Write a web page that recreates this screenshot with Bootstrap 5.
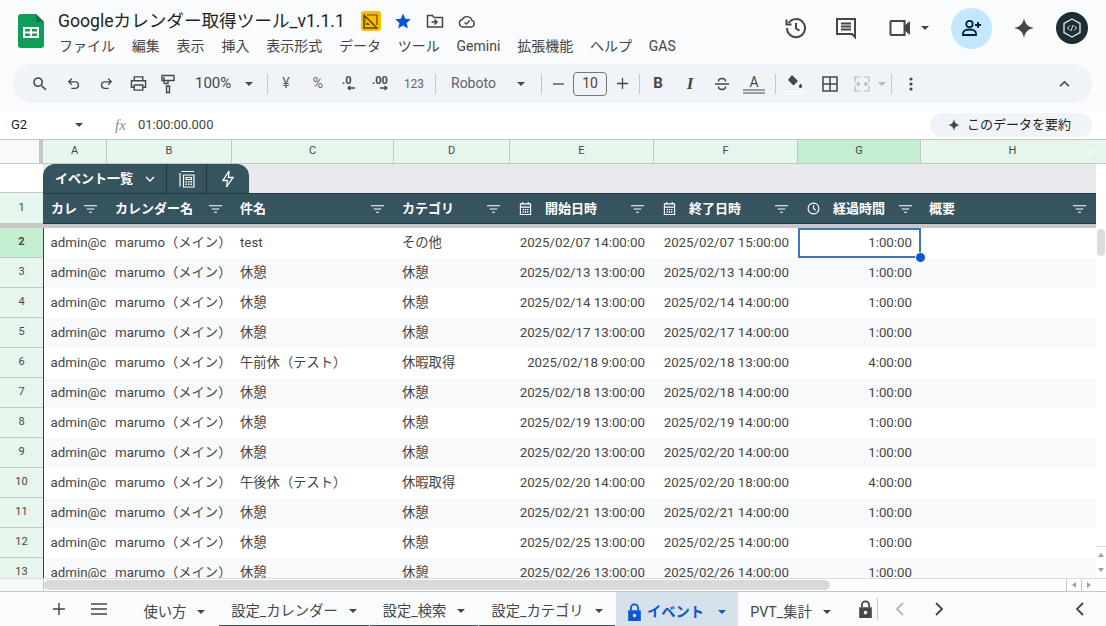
<!DOCTYPE html>
<html lang="ja">
<head>
    <meta charset="UTF-8">
    <title>Googleカレンダー取得ツール_v1.1.1</title>
    <link href="https://cdn.jsdelivr.net/npm/bootstrap@5.3.0/dist/css/bootstrap.min.css" rel="stylesheet">
    <script src="https://cdn.jsdelivr.net/npm/bootstrap@5.3.0/dist/js/bootstrap.bundle.min.js"></script>
    <style>
        html, body { height: 100%; }
        body {
            width: 1106px;
            height: 626px;
            overflow: hidden;
            background: #f9fbfd;
            color: #444746;
            font-family: Roboto, "Noto Sans CJK JP", sans-serif;
            font-size: 13px;
        }
        svg { display: block; flex: none; }
        .ico { fill: none; stroke: #444746; stroke-width: 2; }
        .ico-fill { fill: #444746; }

        /* title area */
        .top-head { height: 64px; }
        .logo-box { width: 58px; padding: 14px 0 0 18px; }
        .doc-title { font-size: 17.6px; line-height: 22px; color: #1f1f1f; padding-top: 10px; white-space: nowrap; }
        .title-icons { margin-left: 16px; }
        .title-icon { width: 32px; display: flex; justify-content: center; }
        .badge-box { width: 20px; height: 20px; margin-right: 6px; border-radius: 3px; background: #fbbc04; display: flex; align-items: center; justify-content: center; }
        .menu-line { gap: 16.8px; font-size: 14px; line-height: 20px; margin-top: 4px; margin-left: 1px; color: #444746; white-space: nowrap; }
        .head-right { margin-left: auto; padding-bottom: 8px; padding-right: 18px; }
        .hd-history { margin-right: 26px; }
        .hd-comment { margin-right: 30px; }
        .hd-video { margin-right: 9px; }
        .hd-caret { margin-right: 22px; }
        .hd-star { margin: 0 20px; }
        .share-round { width: 41px; height: 41px; border-radius: 50%; background: #c2e7ff; display: flex; align-items: center; justify-content: center; }
        .avatar-round { width: 32px; height: 32px; border-radius: 50%; background: #1b2f33; display: flex; align-items: center; justify-content: center; }

        /* toolbar */
        .tool-bar { height: 39px; margin: 0 14px 8px 13px; padding: 0 12px 0 10px; background: #f0f4f9; border-radius: 20px; color: #444746; }
        .tb { width: 32px; height: 39px; display: flex; align-items: center; justify-content: center; flex: none; font-size: 13px; white-space: nowrap; }
        .tb-small { font-size: 12px; color: #5f6368; }
        .tb-grey { color: #5f6368; font-size: 14px; }
        .tb-sep { width: 1px; height: 20px; background: #c7c7c7; flex: none; }
        .w-search { width: 34px; } .w-undo { width: 33px; } .w-redo { width: 31px; } .w-print { width: 34px; } .w-paint { width: 26px; }
        .zoom-txt { width: 60px; padding-left: 14px; justify-content: flex-start; font-size: 15px; }
        .w-caret { width: 16px; }
        .font-txt { width: 62px; justify-content: flex-start; font-size: 14px; color: #5f6368; }
        .w-step { width: 24px; }
        .size-box { width: 34px; height: 24px; border: 1px solid #747775; border-radius: 4px; display: flex; align-items: center; justify-content: center; font-size: 14px; flex: none; }
        .fmt-b { font-weight: 700; font-size: 15px; }
        .fmt-i { font-family: "Liberation Serif", serif; font-weight: 700; font-style: italic; font-size: 17px; }
        .m-l2 { margin-left: 2px; } .m-l3 { margin-left: 3px; } .m-l5 { margin-left: 5px; } .m-l10 { margin-left: 10px; } .m-l12 { margin-left: 12px; } .m-l15 { margin-left: 15px; } .m-r2 { margin-right: 2px; } .m-r4 { margin-right: 4px; }
        .tri { width: 0; height: 0; border-left: 4px solid transparent; border-right: 4px solid transparent; border-top: 4px solid #444746; flex: none; }
        .tri-muted { border-top-color: #b5b8bb; }
        .tri-blue { border-top-color: #0b57d0; }

        /* formula bar */
        .formula-bar { height: 29px; background: #fff; border-bottom: 1px solid #c4c7c5; }
        .cell-ref { width: 75px; padding-left: 11px; font-size: 13px; color: #1f1f1f; }
        .fx-mark { width: 16px; margin-left: 32px; margin-right: 7px; font-family: "Liberation Serif", serif; font-style: italic; font-size: 15px; color: #8a8d90; }
        .sum-pill { margin-left: auto; margin-right: 14px; width: 162px; height: 24px; background: #f0f4f9; border-radius: 12px; display: flex; align-items: center; justify-content: center; gap: 6px; color: #1f1f1f; font-size: 13px; }
        .sum-pill span { margin-right: 4px; }

        /* sheet */
        .sheet-wrap { height: 438px; }
        .sheet-grid {
            width: 1096px;
            height: 438px;
            overflow: hidden;
            display: grid;
            grid-template-columns: 43px 64px 125px 162px 116px 144px 144px 123px 175px;
            grid-template-rows: 24px 29px 31px 4px;
            grid-auto-rows: 30px;
            align-content: start;
            background: #fff;
        }
        .col-head { background: #e7f6ed; border-right: 1px solid #c4c7c5; border-bottom: 1px solid #c4c7c5; display: flex; align-items: center; justify-content: center; font-size: 11px; color: #444746; }
        .corner-cell { background: #f8f9fa; border-right: 4px solid #c4c7c5; }
        .col-on { background: #c4eed0; }
        .col-last { border-right: 0; padding-left: 8px; }
        .row-no { background: #e7f6ed; border-bottom: 1px solid #c4c7c5; display: flex; align-items: center; justify-content: center; font-size: 11px; color: #444746; }
        .row-on { background: #c4eed0; font-weight: 700; }
        .blank-no { background: #fff; border-bottom: 1px solid #c4c7c5; }
        .band-area { grid-column: 2 / -1; background: #e8eaed; }
        .table-tab { width: 206px; height: 29px; background: #36545e; color: #fff; border-radius: 12px 12px 0 0; display: flex; font-weight: 700; font-size: 13px; }
        .tab-part { display: flex; align-items: center; justify-content: center; height: 29px; border-right: 1px solid #1f363d; }
        .tab-name { width: 124px; gap: 12px; justify-content: flex-start; padding-left: 12px; }
        .tab-ico { width: 40px; }
        .tab-ico-end { width: 42px; border-right: 0; }
        .head-cell { background: #36545e; border-top: 1px solid #1f3a42; border-bottom: 1px solid #1f3a42; color: #fff; font-weight: 700; display: flex; align-items: center; padding: 0 9px 0 8px; overflow: hidden; white-space: nowrap; }
        .head-cell .flt { margin-left: auto; }
        .head-gap { gap: 13px; padding-left: 9px; }
        .head-clip { overflow: hidden; width: 28px; flex: none; }
        .freeze-bar { grid-column: 1 / -1; background: #c7c7c7; }
        .data-cell { padding: 0 8px; line-height: 30px; font-size: 13.3px; white-space: nowrap; overflow: hidden; color: #444746; }
        .cell-right { text-align: right; padding-right: 9px; }
        .alt-row { background: #f8f9fa; }
        .first-col { border-left: 1.5px solid #3c4043; padding-left: 6.5px; }
        .sel-cell { position: relative; box-shadow: inset 0 0 0 2px #3f73c4; overflow: visible; }
        .sel-dot { position: absolute; right: -5px; bottom: -5px; width: 9px; height: 9px; border-radius: 50%; background: #0b57d0; border: 1px solid #fff; box-sizing: content-box; z-index: 2; }

        .v-scroll { width: 10px; background: #fff; position: relative; }
        .v-head { height: 24px; background: #e7f6ed; border-bottom: 1px solid #c4c7c5; }
        .v-thumb { position: absolute; top: 89px; left: 1px; width: 8px; height: 27px; background: #dadce0; border-radius: 4px; }
        .v-btns { position: absolute; top: 406px; left: 0; width: 10px; height: 32px; border-top: 1px solid #d5d5d5; display: flex; flex-direction: column; align-items: center; justify-content: space-around; }
        .tri-up { width: 0; height: 0; border-left: 3px solid transparent; border-right: 3px solid transparent; border-bottom: 4px solid #9aa0a6; }
        .tri-dn { width: 0; height: 0; border-left: 3px solid transparent; border-right: 3px solid transparent; border-top: 4px solid #9aa0a6; }
        .h-mark { position: absolute; top: 11px; right: 11px; width: 0; height: 0; border-left: 4px solid transparent; border-right: 4px solid transparent; border-top: 4px solid #f6fbf8; }

        .h-scroll { height: 13px; background: #fff; border-top: 1px solid #dadce0; }
        .h-left { width: 44px; height: 12px; background: #f8f9fa; border-right: 1px solid #c4c7c5; }
        .h-track { width: 1022px; padding-top: 1px; }
        .h-thumb { width: 786px; height: 10px; background: #d9d9d9; border-radius: 5px; }
        .h-btns { width: 30px; display: flex; }
        .h-btn { width: 15px; height: 12px; border-left: 1px solid #c4c7c5; display: flex; align-items: center; justify-content: center; }
        .tri-l { width: 0; height: 0; border-top: 3px solid transparent; border-bottom: 3px solid transparent; border-right: 4px solid #9aa0a6; }
        .tri-r { width: 0; height: 0; border-top: 3px solid transparent; border-bottom: 3px solid transparent; border-left: 4px solid #9aa0a6; }

        /* sheet tabs */
        .tabs-bar { height: 35px; border-top: 1px solid #c4c7c5; background: #f9fbfd; }
        .tabs-left { width: 136px; padding-left: 53px; flex: none; }
        .hamburger { margin-left: 26px; }
        .sheet-tab { height: 34px; padding-top: 5px; display: flex; align-items: center; justify-content: center; gap: 11px; font-size: 14.3px; line-height: 20px; color: #444746; white-space: nowrap; flex: none; }
        .tab-line { border-bottom: 1px solid #36545e; margin-right: 1px; }
        .t1 { width: 83px; padding-right: 6px; } .t2 { width: 150px; } .t3 { width: 108px; } .t4 { width: 136px; } .t6 { width: 107px; padding-right: 2px; }
        .t5 { width: 122px; background: #d7e1ec; color: #0b57d0; font-weight: 700; gap: 6px; }
        .tab-name-blue { margin-right: 8px; }
        .tab-end { margin-left: 14px; }
        .tab-div { width: 1px; height: 22px; background: #c4c7c5; margin-left: 5px; }
        .tab-prev { margin-left: 17px; }
        .tab-next { margin-left: 31px; }
        .tab-fold { margin-left: auto; margin-right: 22px; }
    </style>
</head>
<body>
    <svg width="0" height="0" class="position-absolute">
        <symbol id="flt" viewBox="0 0 16 10"><path d="M1 1h14v1H1zM4 4.500h8v1H4zM6.500 8h3v1h-3z" fill="#fff"/></symbol>
        <symbol id="cal" viewBox="0 0 14 16"><path d="M1.500 3h11v11.500h-11zM1.500 6.500h11M4 1v3M10 1v3" fill="none" stroke="#fff" stroke-width="1.200"/><path d="M4 8.500h1.500V10H4zM6.300 8.500h1.500V10H6.300zM8.600 8.500h1.500V10H8.600zM4 11h1.500v1.500H4zM6.300 11h1.500v1.500H6.300zM8.600 11h1.500v1.500H8.600z" fill="#fff"/></symbol>
        <symbol id="lock" viewBox="0 0 14 20"><path d="M2 8V5.500a5 5 0 0 1 10 0V8h-2V5.500a3 3 0 0 0-6 0V8z"/><path fill-rule="evenodd" d="M0 8h14v12H0zM7 12a2 2 0 1 0 0 4 2 2 0 0 0 0-4z"/></symbol>
        <symbol id="star" viewBox="0 0 24 24"><path d="M12 2c1 6 4 9 10 10-6 1-9 4-10 10-1-6-4-9-10-10 6-1 9-4 10-10z"/></symbol>
    </svg>

    <header class="top-head d-flex">
        <div class="logo-box">
            <svg width="26" height="34" viewBox="0 0 26 34">
                <path d="M3 0h15l8 8v23a3 3 0 0 1-3 3H3a3 3 0 0 1-3-3V3a3 3 0 0 1 3-3z" fill="#0f9d58"/>
                <path d="M18 0l8 8h-8z" fill="#0b7a45"/>
                <path d="M5 13h16v11H5zM7 15v2.500h5V15zM14 15v2.500h5V15zM7 19.500V22h5v-2.500zM14 19.500V22h5v-2.500z" fill="#fff" fill-rule="evenodd"/>
            </svg>
        </div>
        <div>
            <div class="d-flex align-items-center doc-title">
                <span>Googleカレンダー取得ツール_v1.1.1</span>
                <div class="d-flex align-items-center title-icons">
                    <span class="badge-box">
                        <svg width="15" height="15" viewBox="0 0 15 15"><path d="M1 1l13 13H1z" fill="none" stroke="#5f4a00" stroke-width="1.500"/><path d="M1 4h3M1 7h2M1 10h3M4 1h10v10" fill="none" stroke="#5f4a00" stroke-width="1.200"/><path d="M4 8l3 3H4z" fill="#5f4a00"/></svg>
                    </span>
                    <span class="title-icon">
                        <svg width="18" height="18" viewBox="0 0 24 24"><path d="M12 2l3 7 7.500.6-5.700 5 1.700 7.400-6.500-3.900L5.500 22l1.700-7.400-5.700-5L9 9z" fill="#0b57d0"/></svg>
                    </span>
                    <span class="title-icon">
                        <svg width="18" height="16" viewBox="0 0 18 16"><path d="M1.500 2.500h5l1.500 2h8.500v9.500h-15z" fill="none" stroke="#444746" stroke-width="1.500"/><path d="M5.500 9h5M8.500 6.500L11 9l-2.500 2.500" fill="none" stroke="#444746" stroke-width="1.500"/></svg>
                    </span>
                    <span class="title-icon">
                        <svg width="18" height="14" viewBox="0 0 18 14"><path d="M5 13a3.800 3.800 0 0 1-.6-7.500 5 5 0 0 1 9.400.9A3.400 3.400 0 0 1 13.500 13z" fill="none" stroke="#444746" stroke-width="1.400"/><path d="M6.500 8.500l2 1.500 3-3.500" fill="none" stroke="#444746" stroke-width="1.400"/></svg>
                    </span>
                </div>
            </div>
            <nav class="d-flex menu-line">
                <span>ファイル</span><span>編集</span><span>表示</span><span>挿入</span><span>表示形式</span><span>データ</span><span>ツール</span><span>Gemini</span><span>拡張機能</span><span>ヘルプ</span><span>GAS</span>
            </nav>
        </div>
        <div class="head-right d-flex align-items-center">
            <svg class="hd-history" width="24" height="24" viewBox="0 0 24 24"><path d="M4.600 7A9 9 0 1 1 3 12" class="ico"/><path d="M2.500 3.500V8.500H7.500" class="ico"/><path d="M12 7v5.500l3.500 2.200" class="ico"/></svg>
            <svg class="hd-comment" width="24" height="24" viewBox="0 0 24 24"><path d="M3 3h18v18l-3-3H3z" class="ico"/><path d="M7 7.500h10M7 10.500h10M7 13.500h10" class="ico"/></svg>
            <svg class="hd-video" width="24" height="24" viewBox="0 0 24 24"><path d="M3.500 5h13v14h-13a1 1 0 0 1-1-1V6a1 1 0 0 1 1-1z" class="ico"/><path d="M16 10l6-5v14l-6-5z" class="ico-fill"/></svg>
            <span class="tri hd-caret"></span>
            <span class="share-round">
                <svg width="20" height="18" viewBox="0 0 20 18"><circle cx="7.500" cy="5" r="3.200" fill="none" stroke="#001d35" stroke-width="1.800"/><path d="M1 16v-1.500c0-2.500 3-4 6.500-4s6.500 1.500 6.500 4V16z" fill="none" stroke="#001d35" stroke-width="1.800"/><path d="M16 3v6M13 6h6" stroke="#001d35" stroke-width="1.800"/></svg>
            </span>
            <svg class="ico-fill hd-star" width="24" height="24"><use href="#star"/></svg>
            <span class="avatar-round">
                <svg width="22" height="22" viewBox="0 0 22 22"><path d="M11 2l8 4.500v9L11 20l-8-4.500v-9z" fill="none" stroke="#e8eaed" stroke-width="1.300"/><path d="M9 8.500L6.500 11 9 13.500M13 8.500l2.500 2.500-2.500 2.500M12 8l-2 6" fill="none" stroke="#e8eaed" stroke-width="1"/></svg>
            </span>
        </div>
    </header>

    <div class="tool-bar d-flex align-items-center">
        <span class="tb w-search"><svg width="18" height="18" viewBox="0 0 24 24"><path d="M15.500 14h-.79l-.28-.27C15.410 12.590 16 11.110 16 9.500 16 5.910 13.090 3 9.500 3S3 5.910 3 9.500 5.910 16 9.500 16c1.610 0 3.090-.59 4.230-1.570l.27.28v.79l5 4.990L20.490 19l-4.990-5zm-6 0C7.010 14 5 11.990 5 9.500S7.010 5 9.500 5 14 7.010 14 9.500 11.990 14 9.500 14z" class="ico-fill"/></svg></span>
        <span class="tb w-undo"><svg width="14" height="14" viewBox="0 0 16 16"><path d="M5.500 2L2 5.500 5.500 9M2 5.500h8a3.800 3.800 0 0 1 0 7.500H5" fill="none" stroke="#444746" stroke-width="1.500"/></svg></span>
        <span class="tb w-redo"><svg width="14" height="14" viewBox="0 0 16 16"><path d="M10.500 2L14 5.500 10.500 9M14 5.500H6a3.800 3.800 0 0 0 0 7.500h5" fill="none" stroke="#444746" stroke-width="1.500"/></svg></span>
        <span class="tb w-print"><svg width="17" height="17" viewBox="0 0 18 18"><path d="M4.500 6V2h9v4M4.500 13H1.500V6h15v7h-3M4.500 10.500h9V16h-9z" fill="none" stroke="#444746" stroke-width="1.500"/></svg></span>
        <span class="tb w-paint"><svg width="14" height="20" viewBox="0 0 14 20"><path d="M1 1.500h12v5H1zM7 6.500v3h-4M3 9.500V3M5.500 12h3v6.500h-3z" fill="none" stroke="#444746" stroke-width="1.400"/></svg></span>
        <span class="tb zoom-txt">100%</span>
        <span class="tb w-caret"><span class="tri"></span></span>
        <span class="tb-sep m-l10 m-r2"></span>
        <span class="tb tb-grey">¥</span>
        <span class="tb tb-grey">%</span>
        <span class="tb"><svg width="20" height="20" viewBox="0 0 20 20"><text x="2" y="10" font-size="11" font-weight="700" fill="#444746" font-family="Roboto">.0</text><path d="M15 14H8M10.500 12L8 14l2.500 2" fill="none" stroke="#444746" stroke-width="1.300"/></svg></span>
        <span class="tb"><svg width="22" height="20" viewBox="0 0 22 20"><text x="1" y="10" font-size="11" font-weight="700" fill="#444746" font-family="Roboto">.00</text><path d="M9 14h7M13.500 12l2.500 2-2.500 2" fill="none" stroke="#444746" stroke-width="1.300"/></svg></span>
        <span class="tb tb-small">123</span>
        <span class="tb-sep m-l5"></span>
        <span class="tb font-txt m-l15">Roboto</span>
        <span class="tb w-caret"><span class="tri"></span></span>
        <span class="tb-sep m-l12 m-r4"></span>
        <span class="tb w-step"><svg width="11" height="2" viewBox="0 0 12 2"><path d="M0 .3h12v1.400H0z" class="ico-fill"/></svg></span>
        <span class="size-box m-l3">10</span>
        <span class="tb w-step m-l3"><svg width="11" height="11" viewBox="0 0 12 12"><path d="M5.300 0h1.400v5.300H12v1.400H6.700V12H5.300V6.700H0V5.300h5.300z" class="ico-fill"/></svg></span>
        <span class="tb-sep m-l5"></span>
        <span class="tb m-l2 fmt-b">B</span>
        <span class="tb fmt-i">I</span>
        <span class="tb"><svg width="16" height="16" viewBox="0 0 16 16"><path d="M1 8h14M4.500 5.500a3.500 3 0 0 1 7 0M4.500 10.500a3.500 3 0 0 0 7 0" fill="none" stroke="#444746" stroke-width="1.500"/></svg></span>
        <span class="tb"><svg width="24" height="22" viewBox="0 0 24 22"><text x="12" y="14" text-anchor="middle" font-size="14" fill="#444746" font-family="Roboto">A</text><path d="M1 17h22M1 20h22" stroke="#444746" stroke-width="1"/></svg></span>
        <span class="tb-sep m-l5"></span>
        <span class="tb m-l3"><svg width="24" height="24" viewBox="0 0 24 24"><path d="M9 3l6 6-4.500 4.500L5 8z" class="ico-fill"/><path d="M17.500 11.500c1.200 1.600 1.600 2.400 1.600 3a1.600 1.600 0 0 1-3.200 0c0-.6.400-1.400 1.600-3z" class="ico-fill"/><path d="M1 19.500h22M1 22h22" stroke="#fff" stroke-width="1"/></svg></span>
        <span class="tb m-l3"><svg width="16" height="16" viewBox="0 0 16 16"><path d="M1 1h14v14H1zM8 1v14M1 8h14" fill="none" stroke="#444746" stroke-width="1.500"/></svg></span>
        <span class="tb"><svg width="16" height="16" viewBox="0 0 16 16"><path d="M1 6V1h5M10 1h5v5M1 10v5h5M10 15h5v-5M1 8h4M11 8h4M3.500 6l2 2-2 2M12.500 6l-2 2 2 2" fill="none" stroke="#b5b8bb" stroke-width="1.200"/></svg></span>
        <span class="d-flex"><span class="tri tri-muted"></span></span>
        <span class="tb-sep m-l5"></span>
        <span class="tb m-l3"><svg width="4" height="14" viewBox="0 0 4 14"><circle cx="2" cy="2" r="1.600" class="ico-fill"/><circle cx="2" cy="7" r="1.600" class="ico-fill"/><circle cx="2" cy="12" r="1.600" class="ico-fill"/></svg></span>
        <span class="tb ms-auto"><svg width="11" height="7" viewBox="0 0 12 8"><path d="M1 7l5-5 5 5" fill="none" stroke="#444746" stroke-width="1.800"/></svg></span>
    </div>

    <div class="formula-bar d-flex align-items-center">
        <span class="cell-ref">G2</span>
        <span class="tri"></span>
        <span class="fx-mark">fx</span>
        <span>01:00:00.000</span>
        <div class="sum-pill">
            <svg class="ico-fill" width="14" height="14"><use href="#star"/></svg>
            <span>このデータを要約</span>
        </div>
    </div>

    <div class="sheet-wrap d-flex">
        <div class="sheet-grid" id="sheetGrid">
            <div class="col-head corner-cell"></div>
            <div class="col-head">A</div>
            <div class="col-head">B</div>
            <div class="col-head">C</div>
            <div class="col-head">D</div>
            <div class="col-head">E</div>
            <div class="col-head">F</div>
            <div class="col-head col-on">G</div>
            <div class="col-head col-last">H</div>

            <div class="blank-no"></div>
            <div class="band-area">
                <div class="table-tab">
                    <div class="tab-part tab-name">
                        <span>イベント一覧</span>
                        <svg width="10" height="6" viewBox="0 0 10 6"><path d="M1 1l4 4 4-4" fill="none" stroke="#fff" stroke-width="1.400"/></svg>
                    </div>
                    <div class="tab-part tab-ico">
                        <svg width="16" height="18" viewBox="0 0 16 18"><path d="M1 3v13.500M2.500 1.500H15M4.500 5h10.500v12H4.500zM7 7.500h5.500v2H7z" fill="none" stroke="#fff" stroke-width="1.200"/><path d="M6.500 11h1.500v1.500H6.500zM9 11h1.500v1.500H9zM11.500 11H13v1.500h-1.500zM6.500 13.500h1.500V15H6.500zM9 13.500h1.500V15H9zM11.500 13.500H13V15h-1.500z" fill="#fff"/></svg>
                    </div>
                    <div class="tab-part tab-ico-end">
                        <svg width="12" height="18" viewBox="0 0 12 18"><path d="M7 1L1 10.500h4.500L4.500 17 11 7.500H6.500z" fill="none" stroke="#fff" stroke-width="1.300"/></svg>
                    </div>
                </div>
            </div>

            <div class="row-no">1</div>
            <div class="head-cell"><span class="head-clip">カレ</span><svg class="flt" width="15" height="10"><use href="#flt"/></svg></div>
            <div class="head-cell"><span>カレンダー名</span><svg class="flt" width="15" height="10"><use href="#flt"/></svg></div>
            <div class="head-cell"><span>件名</span><svg class="flt" width="15" height="10"><use href="#flt"/></svg></div>
            <div class="head-cell"><span>カテゴリ</span><svg class="flt" width="15" height="10"><use href="#flt"/></svg></div>
            <div class="head-cell head-gap"><svg width="13" height="15"><use href="#cal"/></svg><span>開始日時</span><svg class="flt" width="15" height="10"><use href="#flt"/></svg></div>
            <div class="head-cell head-gap"><svg width="13" height="15"><use href="#cal"/></svg><span>終了日時</span><svg class="flt" width="15" height="10"><use href="#flt"/></svg></div>
            <div class="head-cell head-gap"><svg width="13" height="13" viewBox="0 0 14 14"><circle cx="7" cy="7" r="5.800" fill="none" stroke="#fff" stroke-width="1.200"/><path d="M7 3.500V7l2.500 2" fill="none" stroke="#fff" stroke-width="1.200"/></svg><span>経過時間</span><svg class="flt" width="15" height="10"><use href="#flt"/></svg></div>
            <div class="head-cell"><span>概要</span><svg class="flt" width="15" height="10"><use href="#flt"/></svg></div>

            <div class="freeze-bar"></div>
        </div>
        <div class="v-scroll">
            <div class="v-head"></div>
            <span class="h-mark"></span>
            <div class="v-thumb"></div>
            <div class="v-btns"><span class="tri-up"></span><span class="tri-dn"></span></div>
        </div>
    </div>

    <div class="h-scroll d-flex">
        <div class="h-left"></div>
        <div class="h-track"><div class="h-thumb"></div></div>
        <div class="h-btns"><span class="h-btn"><span class="tri-l"></span></span><span class="h-btn"><span class="tri-r"></span></span></div>
    </div>

    <footer class="tabs-bar d-flex align-items-center">
        <div class="tabs-left d-flex align-items-center">
            <svg width="12" height="12" viewBox="0 0 12 12"><path d="M5.300 0h1.400v5.300H12v1.400H6.700V12H5.300V6.700H0V5.300h5.300z" class="ico-fill"/></svg>
            <svg class="hamburger" width="16" height="12" viewBox="0 0 16 12"><path d="M0 1h16M0 6h16M0 11h16" stroke="#444746" stroke-width="1.500"/></svg>
        </div>
        <div class="sheet-tab t1"><span>使い方</span><span class="tri"></span></div>
        <div class="sheet-tab t2 tab-line"><span>設定_カレンダー</span><span class="tri"></span></div>
        <div class="sheet-tab t3 tab-line"><span>設定_検索</span><span class="tri"></span></div>
        <div class="sheet-tab t4 tab-line"><span>設定_カテゴリ</span><span class="tri"></span></div>
        <div class="sheet-tab t5">
            <svg width="13" height="18" fill="#0b57d0"><use href="#lock"/></svg>
            <span class="tab-name-blue">イベント</span><span class="tri tri-blue"></span>
        </div>
        <div class="sheet-tab t6"><span>PVT_集計</span><span class="tri"></span></div>
        <svg class="tab-end" width="13" height="18" fill="#444746"><use href="#lock"/></svg>
        <span class="tab-div"></span>
        <svg class="tab-prev" width="9" height="14" viewBox="0 0 9 14"><path d="M8 1L2 7l6 6" fill="none" stroke="#b5b8bb" stroke-width="1.800"/></svg>
        <svg class="tab-next" width="9" height="14" viewBox="0 0 9 14"><path d="M1 1l6 6-6 6" fill="none" stroke="#444746" stroke-width="1.800"/></svg>
        <svg class="tab-fold" width="9" height="14" viewBox="0 0 9 14"><path d="M8 1L2 7l6 6" fill="none" stroke="#444746" stroke-width="1.800"/></svg>
    </footer>

    <script>
        const kyukei = '休憩';
        const rows = [
            ['test', 'その他', '2025/02/07 14:00:00', '2025/02/07 15:00:00', '1:00:00'],
            [kyukei, kyukei, '2025/02/13 13:00:00', '2025/02/13 14:00:00', '1:00:00'],
            [kyukei, kyukei, '2025/02/14 13:00:00', '2025/02/14 14:00:00', '1:00:00'],
            [kyukei, kyukei, '2025/02/17 13:00:00', '2025/02/17 14:00:00', '1:00:00'],
            ['午前休（テスト）', '休暇取得', '2025/02/18 9:00:00', '2025/02/18 13:00:00', '4:00:00'],
            [kyukei, kyukei, '2025/02/18 13:00:00', '2025/02/18 14:00:00', '1:00:00'],
            [kyukei, kyukei, '2025/02/19 13:00:00', '2025/02/19 14:00:00', '1:00:00'],
            [kyukei, kyukei, '2025/02/20 13:00:00', '2025/02/20 14:00:00', '1:00:00'],
            ['午後休（テスト）', '休暇取得', '2025/02/20 14:00:00', '2025/02/20 18:00:00', '4:00:00'],
            [kyukei, kyukei, '2025/02/21 13:00:00', '2025/02/21 14:00:00', '1:00:00'],
            [kyukei, kyukei, '2025/02/25 13:00:00', '2025/02/25 14:00:00', '1:00:00'],
            [kyukei, kyukei, '2025/02/26 13:00:00', '2025/02/26 14:00:00', '1:00:00']
        ];

        // 行を描画
        const grid = document.getElementById('sheetGrid');
        rows.forEach((r, i) => {
            const no = i + 2;
            const alt = no % 2 === 1 ? ' alt-row' : '';
            const sel = i === 0;
            grid.insertAdjacentHTML('beforeend',
                `<div class="row-no${sel ? ' row-on' : ''}">${no}</div>` +
                `<div class="data-cell first-col${alt}">admin@c</div>` +
                `<div class="data-cell${alt}">marumo（メイン）</div>` +
                `<div class="data-cell${alt}">${r[0]}</div>` +
                `<div class="data-cell${alt}">${r[1]}</div>` +
                `<div class="data-cell cell-right${alt}">${r[2]}</div>` +
                `<div class="data-cell cell-right${alt}">${r[3]}</div>` +
                `<div class="data-cell cell-right${alt}${sel ? ' sel-cell' : ''}">${r[4]}${sel ? '<span class="sel-dot"></span>' : ''}</div>` +
                `<div class="data-cell${alt}"></div>`);
        });
    </script>
</body>
</html>
